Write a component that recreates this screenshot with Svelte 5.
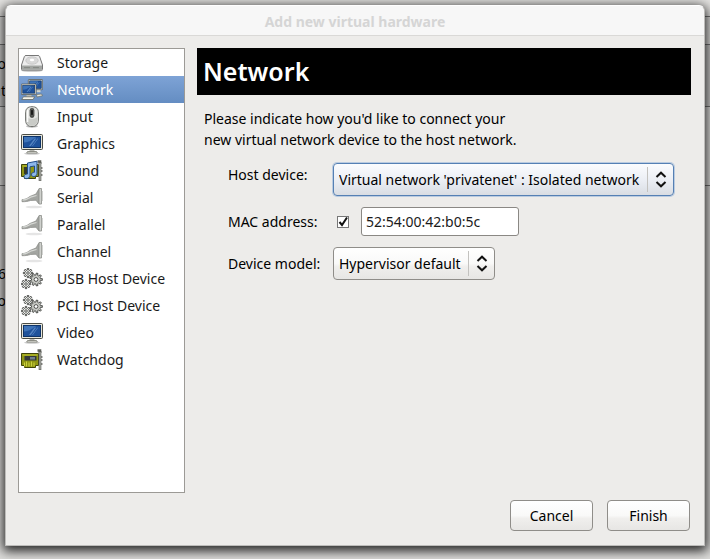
<script>
  let selected = $state('Network');
  let macOn = $state(true);
  let mac = $state('52:54:00:42:b0:5c');
  const items = [
    ['Storage', 'disk'],
    ['Network', 'net'],
    ['Input', 'mouse'],
    ['Graphics', 'screen'],
    ['Sound', 'sound'],
    ['Serial', 'plug'],
    ['Parallel', 'plug'],
    ['Channel', 'plug'],
    ['USB Host Device', 'gears'],
    ['PCI Host Device', 'gears'],
    ['Video', 'screen'],
    ['Watchdog', 'card'],
  ];

  // Outline of a cog with n square teeth between radii a and b.
  function cog(n, a, b) {
    const pts = [];
    for (let i = 0; i < n; i++) {
      const step = (2 * Math.PI) / n;
      for (const [f, r] of [[-0.27, a], [-0.2, b], [0.2, b], [0.27, a]]) {
        const t = (i + f) * step;
        pts.push(`${(r * Math.cos(t)).toFixed(2)},${(r * Math.sin(t)).toFixed(2)}`);
      }
    }
    return pts.join(' ');
  }
</script>

{#snippet gear(x, y, n, a, b, fill)}
  <g transform="translate({x} {y})">
    <polygon points={cog(n, a, b)} {fill} stroke="#41433f" stroke-width=".9" stroke-linejoin="round" />
    <circle r={a * 0.42} fill="#fff" stroke="#41433f" stroke-width=".9" />
  </g>
{/snippet}

{#snippet monitor()}
  <rect x="0.5" y="1.5" width="21" height="15" rx="1" fill="#e6e5da" stroke="#4b4d46" />
  <rect x="2.5" y="3.5" width="17" height="11" fill="#1f529b" stroke="#0f3468" />
  <path d="M3 9.5V4h12.500C12 5.500 9 9.500 3 9.500z" fill="#3f74b8" />
  <path d="M13.500 5.500L8 13h1.800l5.500-7.500zM16.500 5.500L11 13h.8l5.500-7.500z" fill="#6c9ad2" opacity=".7" />
{/snippet}

{#snippet board()}
  <path d="M.5 4.500h17v12h-3v2h-11v-2h-3z" fill="#8f9614" stroke="#3f440b" />
  <path d="M1.500 5.500h15v1h-15z" fill="#bec435" />
  <path d="M17.500 3h3M18 8h3.500M18 11h3.500M18 15h3.500" stroke="#5d5f59" stroke-width="1.600" />
  <path d="M16.500 1.500h2.500v19.500" fill="none" stroke="#5d5f59" stroke-width="2.600" />
  <path d="M19 3v17.500" stroke="#c4c6c0" />
{/snippet}

{#snippet icon(kind)}
  <svg class="icon" viewBox="0 0 22 22" aria-hidden="true">
    {#if kind === 'disk'}
      <ellipse cx="11" cy="18.500" rx="11" ry="1.300" fill="#000" opacity=".25" />
      <path d="M5 3.500h12c.8 0 1.300.3 1.600 1l2.900 8.500v4c0 .6-.4 1-1 1h-19c-.6 0-1-.4-1-1v-4L3.400 4.500c.3-.7.8-1 1.600-1z" fill="#ececec" stroke="#777" />
      <path d="M1 13.500h20V17c0 .4-.2.600-.6.600H1.600c-.4 0-.6-.2-.6-.6z" fill="#a2a5a2" />
      <ellipse cx="11" cy="8.500" rx="6.200" ry="3.700" fill="#d9d9d9" stroke="#c2c2c2" stroke-width=".8" />
      <ellipse cx="11" cy="8" rx="2.200" ry="1.200" fill="#fff" />
      <path d="M3 15.600h6M12 15.600h6" stroke="#858784" />
    {:else if kind === 'net'}
      <g transform="translate(7 -.5) scale(.68)">{@render monitor()}</g>
      <path d="M15.500 15.500l5-.5 1 1.700-5.500 1.300z" fill="#eeeee3" stroke="#66685f" stroke-width=".7" />
      <path d="M15.500 11.200h4v2h-4z" fill="#d5d6cc" />
      <g transform="translate(0 4) scale(.7)">{@render monitor()}</g>
      <path d="M5.500 16h5v1.800h-5z" fill="#b9bab0" />
      <path d="M2.400 17.800h11.200l-1.500 2.700H.7z" fill="#f5f4ea" stroke="#66685f" stroke-width=".8" />
    {:else if kind === 'mouse'}
      <ellipse cx="11" cy="20.300" rx="6" ry="1.400" fill="#000" opacity=".25" />
      <path d="M11 .7c4.500 0 6.400 2.200 6.400 6.200v7.200c0 4-2.400 6.500-6.400 6.500s-6.400-2.500-6.400-6.500V6.900C4.600 2.900 6.500.7 11 .7z" fill="#e4e5e2" stroke="#6c6e6a" />
      <path d="M5.500 11c3 2.500 8 2.500 11 0v3.500c0 3-2 5.300-5.500 5.300s-5.500-2.300-5.500-5.300z" fill="#c9cbc7" />
      <path d="M6.700 4v12" stroke="#fff" stroke-width="1.200" />
      <rect x="8.600" y="2" width="4.800" height="10" rx="2.400" fill="#4b4d4a" />
      <rect x="9.800" y="3.500" width="2.400" height="6" rx="1.200" fill="#080808" stroke="#8a8c88" stroke-width=".5" />
    {:else if kind === 'screen'}
      <ellipse cx="11" cy="20.600" rx="8" ry="1.200" fill="#000" opacity=".2" />
      {@render monitor()}
      <path d="M8.500 17h5v2h-5z" fill="#b8b9b2" />
      <path d="M6.500 18.500h9l.8 1.500H5.700z" fill="#f4f4ee" stroke="#777970" stroke-width=".8" />
    {:else if kind === 'plug'}
      <ellipse cx="13" cy="20" rx="8.500" ry="1.300" fill="#000" opacity=".1" />
      <path d="M1 12.600c3 0 5-1 8-3.200l6-2.400 2.500-4.500h1v14h-1L15 13.200l-5.500.3c-2.500.8-5 1.300-8.500 1.200z" fill="#a3a5a1" stroke="#858783" stroke-width=".7" />
      <path d="M1.500 13.200c4-.2 6-2 9-3.400l5-1.300" stroke="#d5d7d3" stroke-width="1.200" fill="none" />
      <path d="M18 1.500h2.500v15.500H18z" fill="#cfd1cd" stroke="#8b8d89" stroke-width=".8" />
      <path d="M20.500 4h1v10h-1z" fill="#a7a9a5" />
    {:else if kind === 'gears'}
      {@render gear(7, 5, 8, 3, 4.700, '#eff0ed')}
      {@render gear(5, 16, 8, 3, 4.700, '#eff0ed')}
      {@render gear(15, 11.500, 9, 4.500, 6.400, '#c6c8c3')}
    {:else if kind === 'sound'}
      {@render board()}
      <path d="M3 7h4v7H3z" fill="#343a2b" />
      <path d="M6.500 3l9.500-1.800v12.300c0 3.500-5.500 4-5.500 1.200 0-1.700 1.400-2.500 3-2.500V6L9 6.800v8.700c0 3.700-6 4.200-6 1.200 0-1.900 1.700-2.700 3.500-2.700z" fill="#8db7ea" stroke="#1f4b87" />
    {:else}
      {@render board()}
      <rect x="3.500" y="7" width="12" height="4.500" fill="#33383a" />
      <rect x="9" y="8" width="5" height="2.500" fill="#6f7f8b" />
      <path d="M3.500 13.500v4M5.500 12.500v5M8 13.500v4M10.500 12.500v5M13 13.500v4" stroke="#cbd13f" />
    {/if}
  </svg>
{/snippet}

{#snippet arrows()}
  <svg class="arrows" viewBox="0 0 12 16" aria-hidden="true">
    <path d="M1.500 5.500L6 1.200l4.500 4.300M1.500 10.500L6 14.800l4.500-4.300" />
  </svg>
{/snippet}

<div class="desktop">
  <div class="behind" aria-hidden="true">
    <div class="b1"></div>
    <div class="b2"></div>
    <div class="b3"><span>So</span><span>ut</span></div>
    <div class="b4"></div>
    <div class="b5"><span>6</span><span>o</span></div>
  </div>
  <div class="dialog" role="dialog" aria-labelledby="title">
    <header id="title">Add new virtual hardware</header>
    <div class="body">
      <nav aria-label="Hardware type">
        {#each items as [name, kind]}
          <button type="button" class="item" class:selected={selected === name} onclick={() => (selected = name)}>
            {@render icon(kind)}<span>{name}</span>
          </button>
        {/each}
      </nav>
      <main>
        <h1>Network</h1>
        <p>Please indicate how you'd like to connect your<br />new virtual network device to the host network.</p>
        <form>
          <label for="host" class="high">Host device:</label>
          <div class="combo focused">
            <select id="host"><option>Virtual network 'privatenet' : Isolated network</option></select>
            {@render arrows()}
          </div>
          <label for="mac">MAC address:</label>
          <div class="mac">
            <span class="check">
              <input type="checkbox" aria-label="Set MAC address" bind:checked={macOn} />
              {#if macOn}
                <svg viewBox="0 0 12 12" aria-hidden="true"><path d="M2.500 6L5 9l5-7.500" /></svg>
              {/if}
            </span>
            <input id="mac" type="text" bind:value={mac} disabled={!macOn} />
          </div>
          <label for="model">Device model:</label>
          <div class="combo">
            <select id="model"><option>Hypervisor default</option></select>
            {@render arrows()}
          </div>
        </form>
      </main>
    </div>
    <footer>
      <button type="button" class="push">Cancel</button>
      <button type="button" class="push">Finish</button>
    </footer>
  </div>
</div>

<style>
  :global(body) {
    margin: 0;
    background: #e4e3e1;
  }
  .desktop {
    position: relative;
    box-sizing: border-box;
    min-height: 100vh;
    padding: 5px 5px 13px;
    display: flex;
    overflow: hidden;
    font: 14px/20px 'Noto Sans', 'Open Sans', sans-serif;
    color: #000;
  }
  .desktop * {
    box-sizing: border-box;
  }
  .behind {
    position: absolute;
    inset: 0;
    display: flex;
    flex-direction: column;
    overflow: hidden;
  }
  .behind div {
    flex: none;
    border-bottom: 1px solid #777;
  }
  .behind span {
    display: block;
    width: 6px;
    height: 27px;
    direction: rtl;
  }
  .b1 {
    height: 17px;
  }
  .b2 {
    height: 28px;
  }
  .b3 {
    height: 62px;
    padding-top: 9px;
    background: #d0cfcd;
  }
  .b4 {
    height: 79px;
  }
  .behind .b5 {
    flex: 1;
    padding-top: 78px;
    border: 0;
    background: #dedddb;
  }
  .dialog {
    position: relative;
    flex: 1;
    min-width: 0;
    display: flex;
    flex-direction: column;
    border: 1px solid #bdbcba;
    border-top-color: #fff;
    border-radius: 6px 6px 0 0;
    background: #edecea;
    box-shadow: 0 3px 12px 2px rgba(0, 0, 0, 0.85);
  }
  header {
    height: 30px;
    border-bottom: 1px solid #dad9d7;
    border-radius: 5px 5px 0 0;
    background: #f7f7f7;
    color: #d5d5d5;
    font-weight: 700;
    line-height: 32px;
    text-align: center;
  }
  .body {
    flex: 1;
    display: flex;
    gap: 12px;
    padding: 12px 13px 0 12px;
  }
  nav {
    flex: none;
    width: 167px;
    border: 1px solid #9c9a96;
    background: #fff;
  }
  .item {
    display: flex;
    align-items: center;
    gap: 14px;
    width: 100%;
    height: 27px;
    padding: 0 2px;
    border: 0;
    background: none;
    color: #1a1a1a;
    font: inherit;
    text-align: left;
  }
  .selected {
    background: linear-gradient(#7ea3d6, #648dc2);
    color: #fff;
  }
  .icon {
    flex: none;
    width: 22px;
    height: 22px;
  }
  main {
    flex: 1;
    min-width: 0;
  }
  h1 {
    margin: 0 0 13px;
    padding: 0 6px;
    background: #000;
    color: #fff;
    font-size: 25px;
    font-weight: 600;
    line-height: 47px;
  }
  p {
    margin: 0 7px 13px;
    line-height: 21px;
  }
  form {
    display: grid;
    grid-template-columns: 93px 1fr;
    align-items: center;
    gap: 11px 12px;
    padding-left: 31px;
  }
  .high {
    align-self: start;
    padding-top: 2px;
  }
  .combo {
    position: relative;
    justify-self: start;
    height: 33px;
  }
  select,
  .push {
    height: 100%;
    border: 1px solid #8f8d89;
    border-radius: 4px;
    background: linear-gradient(#fff, #f9f9f8 50%, #f0efed 60%, #e7e6e4);
    color: #000;
    font: inherit;
  }
  select {
    appearance: none;
    padding: 0 33px 0 5px;
  }
  .focused select {
    border-color: #5580b4;
    background: linear-gradient(#fbfcfe, #eceff5 50%, #d9dde3);
    box-shadow: 0 0 0 1px rgba(110, 155, 210, 0.4);
  }
  .arrows {
    position: absolute;
    top: 4px;
    right: 0;
    width: 27px;
    height: 25px;
    padding: 4px 7px;
    border-left: 1px solid #c3c2bf;
    pointer-events: none;
  }
  .arrows path {
    fill: none;
    stroke: #111;
    stroke-width: 2;
  }
  .mac {
    display: flex;
    align-items: center;
    gap: 12px;
  }
  input[type='text'] {
    width: 158px;
    height: 29px;
    padding: 0 4px;
    border: 1px solid #8a8884;
    border-radius: 3px;
    background: #fff;
    color: #1a1a1a;
    font: inherit;
  }
  .check {
    position: relative;
    display: flex;
    margin-left: 4px;
  }
  .check svg {
    position: absolute;
    inset: 0;
    pointer-events: none;
  }
  .check path {
    fill: none;
    stroke: #111;
    stroke-width: 2;
  }
  input[type='checkbox'] {
    appearance: none;
    width: 12px;
    height: 12px;
    margin: 0;
    border: 1px solid #777;
    background: #fff;
  }
  footer {
    display: flex;
    justify-content: flex-end;
    gap: 14px;
    padding: 7px 14px 14px;
  }
  .push {
    width: 83px;
    height: 31px;
    padding: 0;
  }
</style>
